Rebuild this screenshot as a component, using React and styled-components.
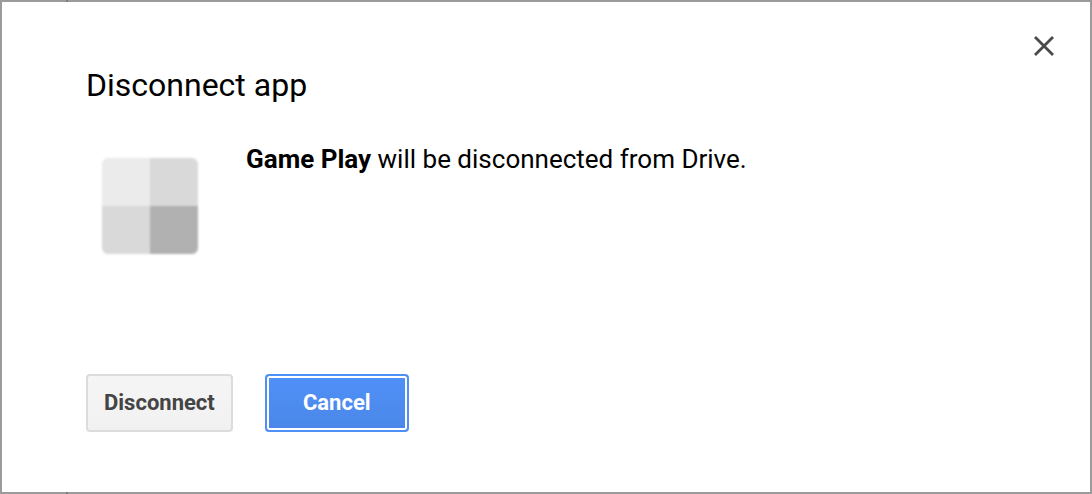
import React from "react";
import styled, { createGlobalStyle } from "styled-components";

const GlobalStyle = createGlobalStyle`
  *, *::before, *::after { box-sizing: border-box; }
  body { margin: 0; font-family: Roboto, "Liberation Sans", sans-serif; color: #000; }
`;

const Backdrop = styled.div`
  min-height: 100vh;
  display: flex;
  padding: 2px;
  background: linear-gradient(90deg, transparent 66px, #7d7d7d 66px, #7d7d7d 68px, transparent 68px), #9b9b9b;
`;

const Dialog = styled.section`
  flex: 1;
  display: flex;
  flex-direction: column;
  padding: 24px 26px 60px 84px;
  background: #fff;
`;

const Header = styled.header`
  display: flex;
  justify-content: space-between;
  align-items: flex-start;
`;

const Title = styled.h1`
  margin: 0;
  padding-top: 39px;
  font-size: 32px;
  line-height: 40px;
  font-weight: 400;
`;

const CloseButton = styled.button`
  display: grid;
  place-items: center;
  width: 40px;
  height: 40px;
  padding: 0;
  border: 0;
  background: transparent;
  color: #4a4a4a;
  cursor: pointer;
`;

const Content = styled.div`
  display: flex;
  align-items: flex-start;
  gap: 48px;
  flex: 1;
  padding: 38px 0 120px 16px;
`;

const AppIcon = styled.svg`
  flex: none;
  margin-top: 15px;
  width: 96px;
  height: 96px;
  border-radius: 6px;
  filter: blur(1px);
`;

const Message = styled.p`
  margin: 0;
  font-size: 26px;
  line-height: 32px;
`;

const Actions = styled.footer`
  display: flex;
  gap: 32px;
`;

const Button = styled.button`
  height: 58px;
  min-width: 144px;
  padding: 0 16px;
  border: 2px solid ${(p) => (p.$primary ? "#4f90f6" : "#dcdcdc")};
  border-radius: 4px;
  background: ${(p) =>
    p.$primary ? "linear-gradient(#5090f7, #4a87e8)" : "linear-gradient(#f5f5f5, #f1f1f1)"};
  box-shadow: ${(p) => (p.$primary ? "inset 0 0 0 2px #fff" : "none")};
  color: ${(p) => (p.$primary ? "#fff" : "#444")};
  font: 700 22px/28px Roboto, "Liberation Sans", sans-serif;
  cursor: pointer;
`;

export default function App() {
  return (
    <Backdrop>
      <GlobalStyle />
      <Dialog role="dialog" aria-labelledby="dialog-title">
        <Header>
          <Title id="dialog-title">Disconnect app</Title>
          <CloseButton type="button" aria-label="Close">
            <svg width="20" height="20" viewBox="0 0 20 20" fill="none" stroke="currentColor" strokeWidth="2.8">
              <path d="M1 1 19 19M19 1 1 19" />
            </svg>
          </CloseButton>
        </Header>
        <Content>
          <AppIcon viewBox="0 0 96 96" aria-hidden="true">
            <rect width="48" height="48" fill="#ebebeb" />
            <rect x="48" width="48" height="48" fill="#d9d9d9" />
            <rect y="48" width="48" height="48" fill="#d9d9d9" />
            <rect x="48" y="48" width="48" height="48" fill="#b1b1b1" />
          </AppIcon>
          <Message>
            <b>Game Play</b> will be disconnected from Drive.
          </Message>
        </Content>
        <Actions>
          <Button type="button">Disconnect</Button>
          <Button type="button" $primary>Cancel</Button>
        </Actions>
      </Dialog>
    </Backdrop>
  );
}
